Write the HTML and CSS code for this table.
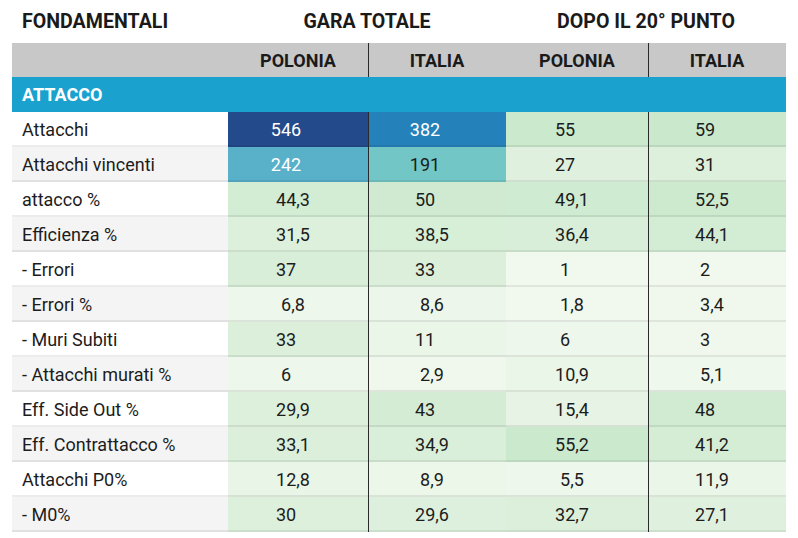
FILE: index.html
```html
<!DOCTYPE html>
<html lang="it">
<head>
<meta charset="utf-8">
<title>Fondamentali</title>
<link rel="stylesheet" href="styles.css">
</head>
<body>
<div class="board">
  <div class="titles">
    <div class="t-label">FONDAMENTALI</div>
    <div class="t-group t-g1">GARA TOTALE</div>
    <div class="t-group t-g2">DOPO IL 20° PUNTO</div>
  </div>
  <table class="stats">
    <colgroup>
      <col class="c-label"><col class="c1"><col class="c2"><col class="c3"><col class="c4">
    </colgroup>
    <thead>
      <tr class="head">
        <th></th><th>POLONIA</th><th class="sep">ITALIA</th><th>POLONIA</th><th class="sep">ITALIA</th>
      </tr>
    </thead>
    <tbody>
      <tr class="section"><td colspan="5">ATTACCO</td></tr>
      <tr>
        <td class="lbl">Attacchi</td>
        <td class="num int hi-navy">546</td>
        <td class="num int hi-blue sep">382</td>
        <td class="num int" style="--v:55">55</td>
        <td class="num int sep" style="--v:57">59</td>
      </tr>
      <tr>
        <td class="lbl">Attacchi vincenti</td>
        <td class="num int hi-sky">242</td>
        <td class="num int hi-teal sep">191</td>
        <td class="num int" style="--v:27">27</td>
        <td class="num int sep" style="--v:31">31</td>
      </tr>
      <tr>
        <td class="lbl">attacco %</td>
        <td class="num" style="--v:44.3">44,3</td>
        <td class="num int sep" style="--v:50">50</td>
        <td class="num" style="--v:49.1">49,1</td>
        <td class="num sep" style="--v:52.5">52,5</td>
      </tr>
      <tr>
        <td class="lbl">Efficienza %</td>
        <td class="num" style="--v:31.5">31,5</td>
        <td class="num sep" style="--v:38.5">38,5</td>
        <td class="num" style="--v:36.4">36,4</td>
        <td class="num sep" style="--v:44.1">44,1</td>
      </tr>
      <tr>
        <td class="lbl">- Errori</td>
        <td class="num int" style="--v:37">37</td>
        <td class="num int sep" style="--v:33">33</td>
        <td class="num int" style="--v:1">1</td>
        <td class="num int sep" style="--v:2">2</td>
      </tr>
      <tr>
        <td class="lbl">- Errori %</td>
        <td class="num" style="--v:6.8">6,8</td>
        <td class="num sep" style="--v:8.6">8,6</td>
        <td class="num" style="--v:1.8">1,8</td>
        <td class="num sep" style="--v:3.4">3,4</td>
      </tr>
      <tr>
        <td class="lbl">- Muri Subiti</td>
        <td class="num int" style="--v:33">33</td>
        <td class="num int sep" style="--v:11">11</td>
        <td class="num int" style="--v:6">6</td>
        <td class="num int sep" style="--v:3">3</td>
      </tr>
      <tr>
        <td class="lbl">- Attacchi murati %</td>
        <td class="num int" style="--v:6">6</td>
        <td class="num sep" style="--v:2.9">2,9</td>
        <td class="num" style="--v:10.9">10,9</td>
        <td class="num sep" style="--v:5.1">5,1</td>
      </tr>
      <tr>
        <td class="lbl">Eff. Side Out %</td>
        <td class="num" style="--v:29.9">29,9</td>
        <td class="num int sep" style="--v:43">43</td>
        <td class="num" style="--v:15.4">15,4</td>
        <td class="num int sep" style="--v:48">48</td>
      </tr>
      <tr>
        <td class="lbl">Eff. Contrattacco %</td>
        <td class="num" style="--v:33.1">33,1</td>
        <td class="num sep" style="--v:34.9">34,9</td>
        <td class="num" style="--v:55.2">55,2</td>
        <td class="num sep" style="--v:41.2">41,2</td>
      </tr>
      <tr>
        <td class="lbl">Attacchi P0%</td>
        <td class="num" style="--v:12.8">12,8</td>
        <td class="num sep" style="--v:8.9">8,9</td>
        <td class="num" style="--v:5.5">5,5</td>
        <td class="num sep" style="--v:11.9">11,9</td>
      </tr>
      <tr>
        <td class="lbl">- M0%</td>
        <td class="num int" style="--v:30">30</td>
        <td class="num sep" style="--v:29.6">29,6</td>
        <td class="num" style="--v:32.7">32,7</td>
        <td class="num sep" style="--v:27.1">27,1</td>
      </tr>
    </tbody>
  </table>
</div>
</body>
</html>
```
FILE: styles.css
```css
html, body {
  margin: 0;
  padding: 0;
  background: #ffffff;
}

body {
  font-family: Roboto, "Liberation Sans", Arial, sans-serif;
  color: #1c1c1c;
}

.board {
  width: 774px;
  margin-left: 12px;
}

.titles {
  display: flex;
  height: 43px;
  align-items: center;
  font-weight: 700;
  font-size: 19.6px;
  color: #1a1a1a;
}

.t-label {
  width: 216px;
  padding-left: 10px;
  box-sizing: border-box;
}

.t-group {
  text-align: center;
}

.t-g1 { width: 278px; }
.t-g2 { width: 280px; }

.stats {
  width: 774px;
  table-layout: fixed;
  border-collapse: separate;
  border-spacing: 0;
  font-size: 18px;
}

.c-label { width: 216px; }
.c1 { width: 140px; }
.c2 { width: 138px; }
.c3 { width: 142px; }
.c4 { width: 138px; }

.stats th,
.stats td {
  padding: 0;
}

.head th {
  height: 34px;
  background: #c8c8c8;
  font-weight: 700;
  font-size: 18px;
  text-align: center;
  color: #1a1a1a;
}

.head th.sep {
  box-shadow: inset 1px 0 0 #2a2a2a;
}

.section td {
  height: 35px;
  background: #1aa1cd;
  color: #ffffff;
  font-weight: 700;
  font-size: 18px;
  padding-left: 10px;
}

tbody tr:not(.section) td {
  height: 35px;
  box-shadow: inset 0 -2px 0 rgba(0, 0, 0, 0.075);
}

tbody tr:not(.section) td.sep {
  box-shadow: inset 1px 0 0 #2a2a2a, inset 0 -2px 0 rgba(0, 0, 0, 0.075);
}

.lbl {
  padding-left: 10px !important;
  background: #ffffff;
  white-space: nowrap;
}

tbody tr:nth-child(odd) .lbl {
  background: #f4f4f4;
}

.num {
  text-align: center;
  padding-right: 10px !important;
  background: color-mix(in srgb, #c9e8cb calc(var(--v, 0) * 1.72%), #f2f9ef);
}

.num.int {
  padding-right: 24px !important;
}

.hi-navy {
  background: #234a8a;
  color: #ffffff;
}

.hi-blue {
  background: #2581ba;
  color: #ffffff;
}

.hi-sky {
  background: #58b0c9;
  color: #ffffff;
}

.hi-teal {
  background: #72c6c5;
  color: #1c1c1c;
}
```
